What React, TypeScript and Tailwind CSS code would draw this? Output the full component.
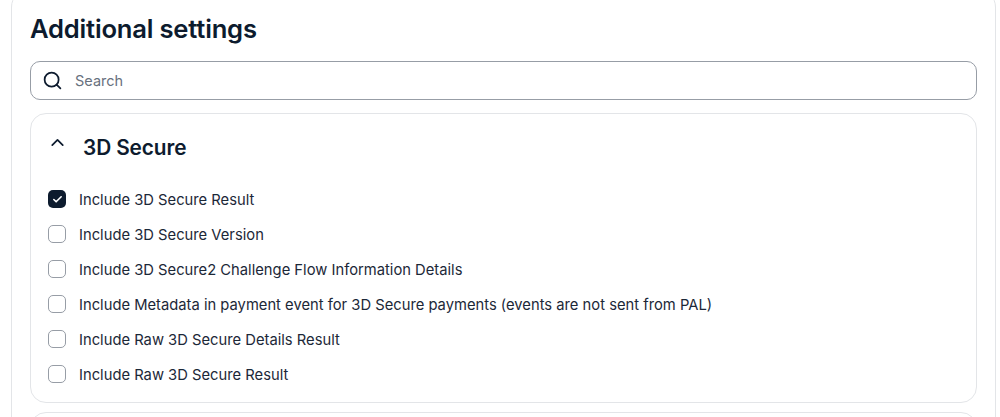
import { Search, ChevronUp, Check } from "lucide-react";

const items = [
  ["Include 3D Secure Result", true],
  ["Include 3D Secure Version", false],
  ["Include 3D Secure2 Challenge Flow Information Details", false],
  ["Include Metadata in payment event for 3D Secure payments (events are not sent from PAL)", false],
  ["Include Raw 3D Secure Details Result", false],
  ["Include Raw 3D Secure Result", false],
] as const;

export default function App() {
  return (
    <div className="h-[417px] overflow-hidden bg-white pl-[11px] pr-[4px] font-['Inter',sans-serif] text-[#0d1b2e]">
      <div className="-mt-[11px] rounded-[18px] border border-[#e3e5e8] px-[18px] pt-[22px]">
        <h2 className="h-[39px] text-[25.6px] leading-[34px] font-semibold tracking-[-0.2px]">Additional settings</h2>
        <div className="mt-[10px] flex h-[39px] items-center rounded-[10px] border border-[#979da6] pl-[11px]">
          <Search className="h-[21px] w-[21px]" strokeWidth={2} />
          <span className="ml-[12px] text-[14.5px] text-[#68717e]">Search</span>
        </div>
        <div className="mt-[13px] h-[290px] rounded-[16px] border border-[#e3e5e8] pl-[17px]">
          <div className="flex items-center pt-[19px]">
            <ChevronUp className="-mt-[11px] -ml-[1px] h-[21px] w-[21px]" strokeWidth={2} />
            <span className="ml-[15px] text-[20.8px] leading-[30px] font-semibold tracking-[-0.1px]">3D Secure</span>
          </div>
          <div className="mt-[26px] flex flex-col gap-[15px]">
            {items.map(([label, checked]) => (
              <div key={label} className="flex h-[20px] items-center gap-[13px]">
                {checked ? (
                  <span className="flex h-[18px] w-[18px] items-center justify-center rounded-[5px] bg-[#0d1b2e] text-white">
                    <Check className="h-[11px] w-[11px]" strokeWidth={3.5} />
                  </span>
                ) : (
                  <span className="h-[18px] w-[18px] rounded-[5px] border border-[#979da6]" />
                )}
                <span className="mt-[1px] text-[14.76px] leading-[20px] text-[#1c2838]">{label}</span>
              </div>
            ))}
          </div>
        </div>
        <div className="mt-[9px] h-[40px] rounded-[16px] border border-[#e3e5e8]" />
      </div>
    </div>
  );
}
